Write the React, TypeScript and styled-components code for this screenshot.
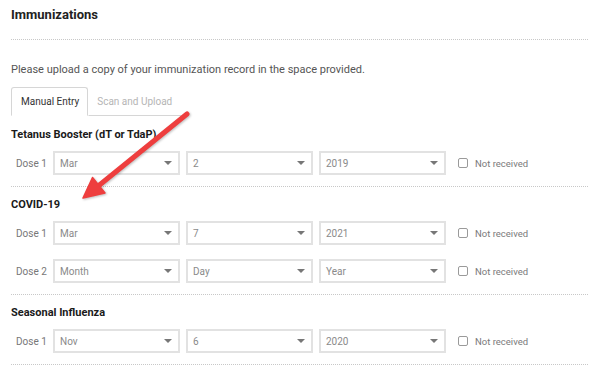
import React from "react";
import styled, { createGlobalStyle } from "styled-components";

const Global = createGlobalStyle`
  html, body { margin: 0; padding: 0; background: #fff; }
  body { font-family: Roboto, "Liberation Sans", Arial, sans-serif; }
  * { box-sizing: border-box; }
`;

const Page = styled.div`
  position: relative;
  width: 600px;
  height: 367px;
  overflow: hidden;
  padding: 0 12px 0 11px;
`;

const Title = styled.h1`
  margin: 0;
  padding-top: 7px;
  height: 40px;
  font-size: 13px;
  line-height: 16px;
  font-weight: 700;
  color: #222;
  border-bottom: 1px dotted #c8c8c8;
`;

const Intro = styled.p`
  margin: 0;
  padding-top: 23px;
  font-size: 11px;
  line-height: 14px;
  color: #555;
`;

const TabList = styled.div`
  display: flex;
  margin-top: 10px;
`;

const Tab = styled.div<{ $active?: boolean }>`
  height: 29px;
  display: flex;
  align-items: center;
  white-space: nowrap;
  font-size: 10px;
  color: ${(p) => (p.$active ? "#333" : "#b5b5b5")};
  border: 1px solid ${(p) => (p.$active ? "#d6d6d6" : "transparent")};
  border-bottom: ${(p) => (p.$active ? "1px solid transparent" : "1px solid #d6d6d6")};
  border-radius: 3px 3px 0 0;
  padding: ${(p) => (p.$active ? "0 8px 0 9px" : "0 9px 0 8px")};
`;

const Section = styled.section<{ $first?: boolean }>`
  padding-top: ${(p) => (p.$first ? "11px" : "10px")};
  padding-bottom: 11px;
  border-bottom: 1px dotted #c8c8c8;
  display: flex;
  flex-direction: column;
  gap: 14px;
`;

const Heading = styled.h2`
  margin: 0 0 -6px;
  font-size: 11px;
  line-height: 16px;
  font-weight: 700;
  color: #1a1a1a;
`;

const Row = styled.div`
  display: flex;
  align-items: center;
  height: 24px;
`;

const DoseLabel = styled.span`
  width: 42px;
  padding-left: 5px;
  font-size: 10px;
  color: #777;
`;

const SelectBox = styled.div`
  position: relative;
  width: 127px;
  height: 24px;
  margin-right: 6px;
  border: 2px solid #e2e2e2;
  display: flex;
  align-items: center;
  padding-left: 5px;
  font-size: 10px;
  color: #8a8a8a;
`;

const Caret = styled.span`
  position: absolute;
  right: 6px;
  top: 8px;
  width: 0;
  height: 0;
  border-left: 4px solid transparent;
  border-right: 4px solid transparent;
  border-top: 4px solid #777;
`;

const CheckWrap = styled.label`
  display: flex;
  align-items: center;
  margin-left: 6px;
  font-size: 9.5px;
  color: #7a7a7a;
  gap: 7px;
`;

const Box = styled.span`
  width: 10px;
  height: 10px;
  border: 1px solid #9a9a9a;
  border-radius: 2px;
`;

const ArrowSvg = styled.svg`
  position: absolute;
  left: 0;
  top: 0;
  pointer-events: none;
  filter: drop-shadow(1px 1px 1px rgba(0, 0, 0, 0.25));
`;

type Dose = { n: number; m: string; d: string; y: string };

const DoseRow = ({ n, m, d, y }: Dose) => (
  <Row>
    <DoseLabel>Dose {n}</DoseLabel>
    <SelectBox>{m}<Caret /></SelectBox>
    <SelectBox>{d}<Caret /></SelectBox>
    <SelectBox>{y}<Caret /></SelectBox>
    <CheckWrap>
      <Box />
      Not received
    </CheckWrap>
  </Row>
);

const sections: { title: string; doses: Dose[] }[] = [
  { title: "Tetanus Booster (dT or TdaP)", doses: [{ n: 1, m: "Mar", d: "2", y: "2019" }] },
  {
    title: "COVID-19",
    doses: [
      { n: 1, m: "Mar", d: "7", y: "2021" },
      { n: 2, m: "Month", d: "Day", y: "Year" },
    ],
  },
  { title: "Seasonal Influenza", doses: [{ n: 1, m: "Nov", d: "6", y: "2020" }] },
];

export default function App() {
  return (
    <>
      <Global />
      <Page>
        <Title>Immunizations</Title>
        <Intro>Please upload a copy of your immunization record in the space provided.</Intro>
        <TabList>
          <Tab $active>Manual Entry</Tab>
          <Tab>Scan and Upload</Tab>
        </TabList>
        {sections.map((s, i) => (
          <Section key={s.title} $first={i === 0}>
            <Heading>{s.title}</Heading>
            {s.doses.map((d) => (
              <DoseRow key={d.n} {...d} />
            ))}
          </Section>
        ))}
        <ArrowSvg width="600" height="367" viewBox="0 0 600 367">
          <line x1="187" y1="114" x2="97" y2="187" stroke="#ee3e3e" strokeWidth="5" strokeLinecap="round" />
          <polygon points="83,198 92.5,177.5 105,193" fill="#ee3e3e" stroke="#ee3e3e" strokeWidth="1.5" strokeLinejoin="round" />
        </ArrowSvg>
      </Page>
    </>
  );
}
